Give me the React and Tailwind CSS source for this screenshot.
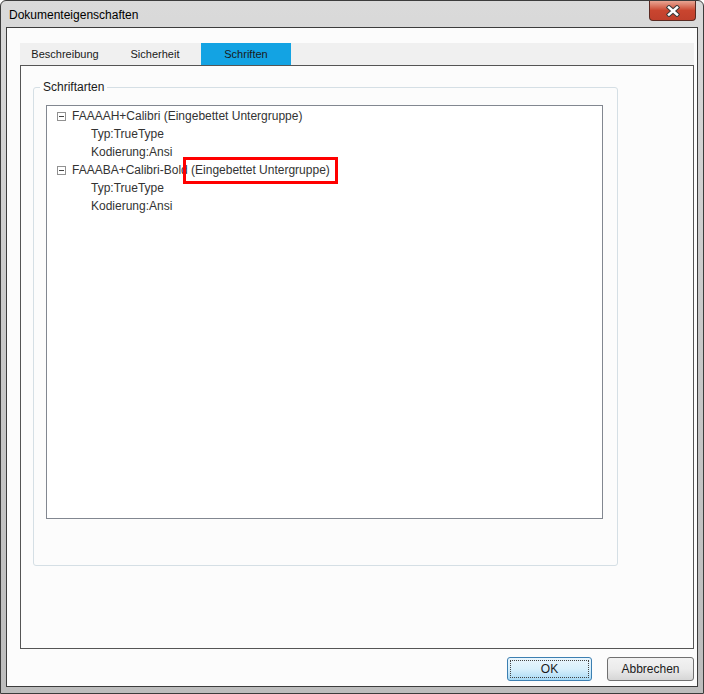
const font = { fontFamily: '"Liberation Sans", Arial, sans-serif' };

function CloseButton() {
  return (
    <div className="absolute right-[7px] top-0 flex h-[20px] w-[47px] items-center justify-center rounded-b-[4px] border border-t-0 border-[#5a2a22] bg-gradient-to-b from-[#e8a593] via-[#c9452f] to-[#c0402c]">
      <svg width="14" height="12" viewBox="0 0 14 12">
        <path d="M3 2.5 L11 9.5 M11 2.5 L3 9.5" stroke="#3a3a3a" strokeWidth="4.5" strokeLinecap="square" />
        <path d="M3 2.5 L11 9.5 M11 2.5 L3 9.5" stroke="#ffffff" strokeWidth="2.5" strokeLinecap="square" />
      </svg>
    </div>
  );
}

function TreeNode({ label }) {
  return (
    <div>
      <div className="flex h-[18px] items-center">
        <div className="ml-[10px] mr-[6px] flex h-[9px] w-[9px] items-center justify-center border border-[#919191] bg-white">
          <div className="h-px w-[5px] bg-[#444]" />
        </div>
        <span>{label}</span>
      </div>
      <div className="flex h-[18px] items-center pl-[44px]">Typ:TrueType</div>
      <div className="flex h-[18px] items-center pl-[44px]">Kodierung:Ansi</div>
    </div>
  );
}

export default function App() {
  return (
    <div className="bg-white" style={font}>
      <div className="relative flex h-[694px] w-[704px] flex-col rounded-t-[6px] border border-[#3c3c3c] bg-gradient-to-b from-[#dadada] via-[#c8c8c8] to-[#bdbdbd] px-[5px] pb-[6px]">
        {/* title bar */}
        <div className="flex h-[26px] items-center pl-[3px] pt-[2px] text-[12px] text-black">
          Dokumenteigenschaften
        </div>
        <CloseButton />

        {/* client area */}
        <div className="flex flex-1 flex-col border border-[#3c3c3c] bg-[#fcfcfc] pl-[13px] pr-[2px] pt-[15px]">
          {/* tabs */}
          <div className="flex h-[22px] w-[674px] bg-[#f0f0f0] text-[11px] text-[#1a1a1a]">
            <div className="flex w-[90px] items-center justify-center">Beschreibung</div>
            <div className="flex w-[90px] items-center justify-center">Sicherheit</div>
            <div className="ml-px flex w-[90px] items-center justify-center bg-[#13a3e3]">Schriften</div>
          </div>

          {/* tab panel */}
          <div className="h-[584px] w-[674px] border border-[#555] bg-[#fcfcfc] pl-[12px] pt-[21px]">
            <div className="relative h-[479px] w-[585px] rounded-[3px] border border-[#d5dfe5] pb-[46px] pl-[12px] pr-[14px] pt-[17px]">
              <div className="absolute left-[6px] top-[-8px] bg-[#fcfcfc] px-[3px] text-[12px] leading-[14px] text-[#1a1a1a]">
                Schriftarten
              </div>
              <div className="relative h-full border border-[#828790] bg-white pt-[1px] text-[12px] text-[#333]">
                <TreeNode label="FAAAAH+Calibri (Eingebettet Untergruppe)" />
                <TreeNode label="FAAABA+Calibri-Bold (Eingebettet Untergruppe)" />
                <div className="absolute left-[136px] top-[51px] h-[27px] w-[155px] border-[3px] border-[#f00]" />
              </div>
            </div>
          </div>

          {/* buttons */}
          <div className="mt-[8px] flex justify-end gap-[15px] pr-[1px] text-[12px] text-[#1a1a1a]">
            <div className="flex h-[24px] w-[85px] items-center justify-center rounded-[3px] border border-[#3c7fb1] bg-gradient-to-b from-[#eaf6fd] via-[#d9f0fc] to-[#a7d9f5] p-[2px]">
              <div className="flex h-full w-full items-center justify-center border border-dotted border-[#444]">OK</div>
            </div>
            <div className="flex h-[24px] w-[87px] items-center justify-center rounded-[3px] border border-[#707070] bg-gradient-to-b from-[#f2f2f2] via-[#ebebeb] to-[#d6d6d6]">
              Abbrechen
            </div>
          </div>
        </div>
      </div>
    </div>
  );
}
